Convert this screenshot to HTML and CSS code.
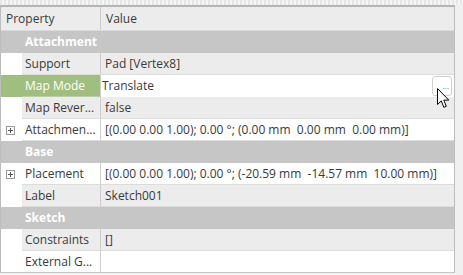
FILE: index.html
```html
<!DOCTYPE html>
<html lang="en">

<head>
  <meta charset="UTF-8">
  <title>Property View</title>
  <link rel="stylesheet" href="styles.css">
</head>

<body>
  <div class="strip"></div>
  <div class="panel">
    <div class="tree">
      <div class="header">
        <div class="hcell">Property</div>
        <div class="hcell">Value</div>
      </div>

      <div class="group">Attachment</div>
      <div class="row alt">
        <div class="branch"></div>
        <div class="name">Support</div>
        <div class="value">Pad [Vertex8]</div>
      </div>
      <div class="row selected">
        <div class="branch"></div>
        <div class="name">Map Mode</div>
        <div class="value editor">
          <span>Translate</span>
          <button class="dots">...</button>
        </div>
      </div>
      <div class="row alt">
        <div class="branch"></div>
        <div class="name">Map Rever...</div>
        <div class="value">false</div>
      </div>
      <div class="row">
        <div class="branch"><span class="expander"></span></div>
        <div class="name">Attachmen...</div>
        <div class="value">[(0.00 0.00 1.00); 0.00 °; (0.00 mm&nbsp; 0.00 mm&nbsp; 0.00 mm)]</div>
      </div>

      <div class="group">Base</div>
      <div class="row">
        <div class="branch"><span class="expander"></span></div>
        <div class="name">Placement</div>
        <div class="value">[(0.00 0.00 1.00); 0.00 °; (-20.59 mm&nbsp; -14.57 mm&nbsp; 10.00 mm)]</div>
      </div>
      <div class="row alt">
        <div class="branch"></div>
        <div class="name">Label</div>
        <div class="value">Sketch001</div>
      </div>

      <div class="group">Sketch</div>
      <div class="row alt">
        <div class="branch"></div>
        <div class="name">Constraints</div>
        <div class="value">[]</div>
      </div>
      <div class="row">
        <div class="branch"></div>
        <div class="name">External G...</div>
        <div class="value"></div>
      </div>
    </div>
    <div class="gutter"></div>
  </div>

  <svg class="cursor" width="13" height="21" viewBox="0 0 13 21">
    <path d="M0.5 0.5 L0.5 16.5 L4.3 12.9 L6.8 19.3 L9.3 18.3 L6.8 12.1 L11.8 12.1 Z" fill="#fff" stroke="#000" stroke-width="1" stroke-linejoin="round" />
  </svg>
</body>

</html>
```

FILE: styles.css
```css
* {
  margin: 0;
  padding: 0;
  box-sizing: border-box;
}

body {
  width: 463px;
  height: 275px;
  overflow: hidden;
  font-family: "Open Sans", "Noto Sans", sans-serif;
  font-size: 12px;
  color: #3a3a3a;
  background: #f2f2f2;
  position: relative;
}

.strip {
  height: 5px;
  background: repeating-linear-gradient(90deg, #e6e6e6 0 2px, #f6f6f6 2px 4px);
}

.panel {
  display: flex;
  height: 270px;
}

.tree {
  width: 455px;
  background: #fff;
  border: 1px solid #bdbdbd;
  border-top: 2px solid #b4b4b4;
  border-bottom: 1px solid #c4c4c4;
  height: 268px;
  overflow: hidden;
}

.gutter {
  flex: 1;
  background: #f0f0f0;
}

.header {
  display: grid;
  grid-template-columns: 100px 1fr;
  height: 24px;
  background: #ececec;
  border-bottom: 1px solid #dadada;
}

.hcell {
  padding-left: 5px;
  line-height: 23px;
}

.hcell:first-child {
  border-right: 1px solid #cfcfcf;
}

.group {
  height: 22px;
  line-height: 22px;
  background: #c6c6c6;
  color: #fff;
  font-weight: bold;
  padding-left: 24px;
}

.row {
  display: grid;
  grid-template-columns: 21px 79px 1fr;
  height: 22px;
  line-height: 22px;
}

.branch {
  background: #fff;
  display: flex;
  align-items: center;
  padding-left: 5px;
}

.name {
  padding-left: 3px;
  border-right: 1px solid #cfcfcf;
  border-bottom: 1px solid #dcdcdc;
  white-space: nowrap;
  overflow: hidden;
}

.value {
  padding-left: 4px;
  border-bottom: 1px solid #dcdcdc;
  white-space: nowrap;
  overflow: hidden;
}

.row.alt .name,
.row.alt .value {
  background: #ececec;
}

.row.selected .branch,
.row.selected .name {
  background: #9fbe7f;
  color: #fff;
}

.row.selected .name {
  border-bottom-color: #b9d1a2;
}

.value.editor {
  background: #fff;
  padding-left: 1px;
  display: flex;
  justify-content: space-between;
  align-items: center;
  padding-right: 2px;
  border-bottom: none;
}

.dots {
  width: 20px;
  height: 20px;
  border: 1px solid #d0d0d0;
  border-radius: 3px;
  background: #fff;
  font-family: "Open Sans", sans-serif;
  font-size: 8px;
  color: #777;
  line-height: 12px;
  text-align: right;
  padding-right: 2px;
}

.expander {
  width: 9px;
  height: 9px;
  border: 1px solid #9a9a9a;
  position: relative;
  background: #fff;
}

.expander::before,
.expander::after {
  content: "";
  position: absolute;
  background: #555;
}

.expander::before {
  left: 1px;
  top: 3px;
  width: 5px;
  height: 1px;
}

.expander::after {
  left: 3px;
  top: 1px;
  width: 1px;
  height: 5px;
}

.cursor {
  position: absolute;
  left: 437px;
  top: 88px;
}
```
